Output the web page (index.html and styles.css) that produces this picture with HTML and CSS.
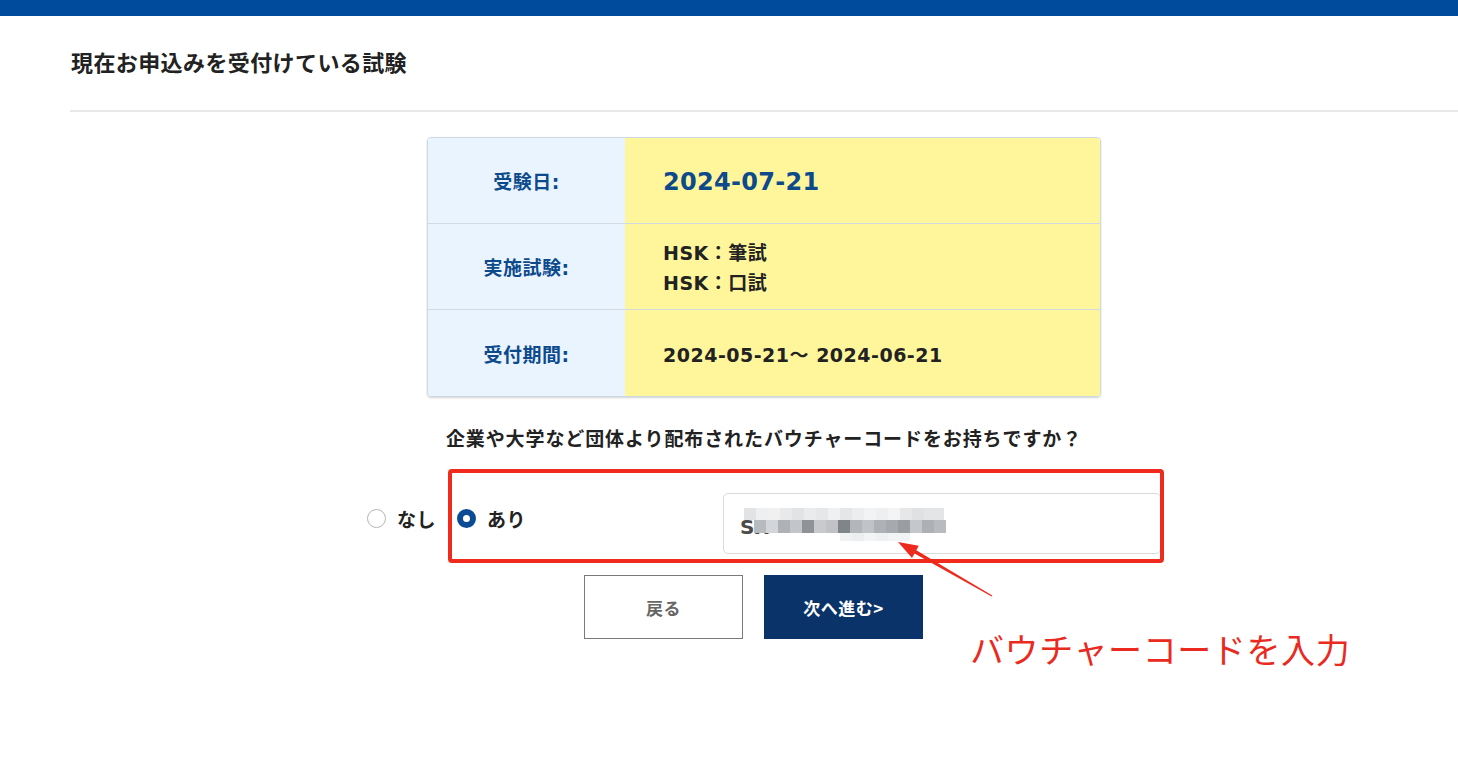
FILE: index.html
```html
<!DOCTYPE html>
<html lang="ja">
<head>
<meta charset="utf-8">
<title>現在お申込みを受付けている試験</title>
<link rel="stylesheet" href="styles.css">
</head>
<body>
<div class="topbar"></div>
<main class="main">
  <h1 class="page-title">現在お申込みを受付けている試験</h1>
  <div class="rule"></div>
  <div class="content">
    <div class="exam-table">
      <div class="exam-row">
        <div class="exam-label">受験日:</div>
        <div class="exam-value exam-date">2024-07-21</div>
      </div>
      <div class="exam-row">
        <div class="exam-label">実施試験:</div>
        <div class="exam-value exam-lines">
          <div>HSK：筆試</div>
          <div>HSK：口試</div>
        </div>
      </div>
      <div class="exam-row">
        <div class="exam-label">受付期間:</div>
        <div class="exam-value">2024-05-21～ 2024-06-21</div>
      </div>
    </div>

    <p class="question">企業や大学など団体より配布されたバウチャーコードをお持ちですか？</p>

    <div class="voucher-row">
      <label class="opt"><span class="radio"></span><span class="opt-text">なし</span></label>
      <label class="opt opt-yes"><span class="radio radio-on"></span><span class="opt-text">あり</span></label>
      <div class="code-field">
        <span class="code-text">SH</span>
        <div class="mosaic">
          <div class="m-top"></div>
          <div class="m-mid"></div>
          <div class="m-bot"></div>
        </div>
      </div>
    </div>

    <div class="buttons">
      <button class="btn btn-back">戻る</button>
      <button class="btn btn-next">次へ進む&gt;</button>
    </div>
  </div>
</main>

<div class="annot-box"></div>
<svg class="annot-arrow" viewBox="0 0 1458 779" width="1458" height="779">
  <polygon points="898,542 918.8,545.7 916.3,550.2 992.3,595.5 991.7,596.5 914.5,553.4 912,557.9" fill="#ee2a1e"/>
</svg>
<div class="annot-text">バウチャーコードを入力</div>
</body>
</html>
```

FILE: styles.css
```css
* { box-sizing: border-box; }

html, body {
  margin: 0;
  padding: 0;
}

body {
  position: relative;
  width: 1458px;
  height: 779px;
  overflow: hidden;
  background: #ffffff;
  font-family: "DejaVu Sans", "Noto Sans CJK JP", sans-serif;
  color: #222222;
}

.topbar {
  height: 16px;
  background: #004b9b;
}

.main {
  padding-left: 70px;
}

.page-title {
  margin: 30px 0 0 1px;
  font-family: "Noto Sans CJK JP", sans-serif;
  font-size: 22px;
  line-height: 30px;
  font-weight: 700;
  letter-spacing: 0.4px;
  color: #222222;
}

.rule {
  margin-top: 34px;
  height: 2px;
  background: #e8e8e8;
}

.content {
  display: flex;
  flex-direction: column;
  align-items: center;
  padding-top: 25px;
}

.exam-table {
  width: 674px;
  border: 1px solid #cfd7e0;
  border-radius: 4px;
  overflow: hidden;
  box-shadow: 0 1px 2px rgba(0, 0, 0, 0.18);
}

.exam-row {
  display: grid;
  grid-template-columns: 197px 1fr;
  height: 86px;
  border-bottom: 1px solid #d3dae2;
}

.exam-row:last-child {
  border-bottom: none;
}

.exam-label {
  display: flex;
  align-items: center;
  justify-content: center;
  background: #eaf4ff;
  color: #0c4a8c;
  font-size: 19px;
  font-weight: 700;
  letter-spacing: 0.5px;
}

.exam-value {
  display: flex;
  flex-direction: column;
  justify-content: center;
  padding-left: 38px;
  padding-top: 3px;
  background: #fff69c;
  font-size: 19px;
  font-weight: 700;
  letter-spacing: 0.5px;
  color: #222222;
  line-height: 30px;
}

.exam-date {
  font-size: 24px;
  letter-spacing: 0.3px;
  color: #0c4a8c;
}

.question {
  margin: 29px 0 0;
  font-size: 19px;
  line-height: 27px;
  font-weight: 700;
  letter-spacing: 0.9px;
  color: #222222;
}

.voucher-row {
  display: flex;
  align-items: center;
  width: 794px;
  height: 61px;
  margin-top: 40px;
}

.opt {
  display: flex;
  align-items: center;
  gap: 11px;
  margin-bottom: 10px;
  font-size: 19px;
  font-weight: 700;
  letter-spacing: 0.5px;
  color: #222222;
}

.opt-yes {
  margin-left: 21px;
}

.radio {
  width: 19px;
  height: 19px;
  border-radius: 50%;
  border: 1px solid #b5b5b5;
  background: #ffffff;
  flex: none;
}

.radio-on {
  border: 6px solid #0b4a94;
  background: #ffffff;
}

.code-field {
  position: relative;
  margin-left: auto;
  width: 438px;
  height: 61px;
  border: 1px solid #dadada;
  border-radius: 5px;
  display: flex;
  align-items: center;
  padding-left: 16px;
  padding-top: 6px;
}

.code-text {
  font-size: 20px;
  font-weight: 700;
  color: #4a4a4a;
  letter-spacing: -1px;
}

.mosaic {
  position: absolute;
  left: 20px;
  top: 14px;
  width: 204px;
}

.m-top {
  height: 12px;
  width: 200px;
  background: linear-gradient(to right,
    #e2e3e5 0 12px, #eeeff0 12px 24px, #f0f0f1 24px 36px, #e8e9eb 36px 48px,
    #e2e3e5 48px 60px, #eaebec 60px 72px, #e6e7e9 72px 84px, #eef0f1 84px 96px,
    #e5e6e8 96px 108px, #ecedee 108px 120px, #f2f3f4 120px 132px, #eeeff0 132px 144px,
    #f4f4f5 144px 156px, #e6e7e9 156px 168px, #e0e1e3 168px 180px, #e4e5e7 180px 200px);
}

.m-mid {
  height: 13px;
  width: 192px;
  margin-left: 10px;
  background: linear-gradient(to right,
    #b8bbbe 0 12px, #d3d5d8 12px 24px, #aeb1b5 24px 36px, #c3c5c8 36px 48px,
    #8f9398 48px 60px, #c8cacd 60px 72px, #c0c2c5 72px 84px, #80858a 84px 96px,
    #b3b6ba 96px 108px, #c1c4c7 108px 120px, #aeb1b5 120px 132px, #a6a9ad 132px 144px,
    #9a9ea2 144px 156px, #c5c7ca 156px 168px, #adb0b4 168px 180px, #b9bcbf 180px 192px);
}

.m-bot {
  height: 8px;
  width: 70px;
  margin-left: 96px;
  background: linear-gradient(to right,
    #f1f2f3 0 12px, #eceef0 12px 24px, #f3f4f5 24px 36px, #eef0f1 36px 48px,
    #f2f3f4 48px 70px);
}

.buttons {
  display: flex;
  margin-top: 21px;
}

.btn {
  width: 159px;
  height: 64px;
  margin-right: 21px;
  font-family: "Noto Sans CJK JP", sans-serif;
  font-size: 17px;
  font-weight: 700;
  letter-spacing: 0.5px;
  border-radius: 0;
  cursor: pointer;
}

.btn-back {
  background: #ffffff;
  border: 1px solid #7a7a7a;
  color: #666666;
}

.btn-next {
  background: #0a3369;
  border: 1px solid #0a3369;
  color: #ffffff;
}

.annot-box {
  position: absolute;
  left: 448px;
  top: 469px;
  width: 716px;
  height: 94px;
  border: 4px solid #f02a1c;
  border-radius: 4px;
  pointer-events: none;
}

.annot-arrow {
  position: absolute;
  left: 0;
  top: 0;
  pointer-events: none;
}

.annot-text {
  position: absolute;
  left: 970px;
  top: 629px;
  font-family: "Noto Sans CJK JP", sans-serif;
  font-size: 34px;
  line-height: 40px;
  font-weight: 400;
  letter-spacing: 0.6px;
  color: #ea2a1e;
  white-space: nowrap;
}
```
